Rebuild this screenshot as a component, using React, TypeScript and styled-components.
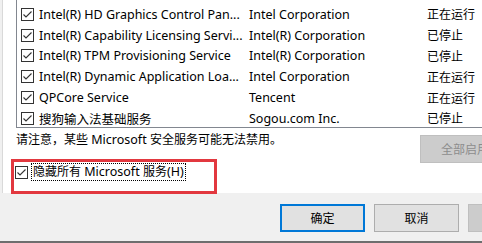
import React from "react";
import styled, { createGlobalStyle } from "styled-components";

const Global = createGlobalStyle`
  html, body { margin: 0; padding: 0; background: #f0f0f0; overflow: hidden; }
  body { width: 482px; height: 243px; }
  * { box-sizing: border-box; }
`;

const Dialog = styled.div`
  position: relative;
  width: 565px;
  height: 243px;
  display: flex;
  flex-direction: column;
  background: #f0f0f0;
  font-family: "Noto Sans", "Noto Sans CJK SC", sans-serif;
  font-size: 12.5px;
  color: #000;
`;

const TabPage = styled.div`
  height: 193px;
  margin-left: 2px;
  border-left: 1px solid #d9d9d9;
  background: #fff;
  display: flex;
  flex-direction: column;
`;

const ListBox = styled.div`
  margin-left: 13px;
  margin-right: 20px;
  height: 128px;
  border-left: 1px solid #828790;
  border-bottom: 1px solid #828790;
  border-right: 1px solid #828790;
  overflow: hidden;
  padding-top: 4px;
`;

const Row = styled.div`
  height: 20.8px;
  display: grid;
  grid-template-columns: 228px 178px 1fr;
  align-items: center;
  padding-left: 4px;
  white-space: nowrap;
`;

const NameCell = styled.div`
  display: flex;
  align-items: center;
  gap: 5px;
  overflow: hidden;
`;

const Cell = styled.div``;

const Cjk = styled.span`
  font-size: 12px;
`;

const Box = styled.span`
  width: 13px;
  height: 13px;
  flex: none;
  border: 1px solid #333;
  background: #fff;
  display: inline-flex;
  align-items: center;
  justify-content: center;
`;

const Check = () => (
  <Box>
    <svg width="11" height="11" viewBox="0 0 11 11">
      <polyline points="1.5,5.5 4,8 9.5,2.5" fill="none" stroke="#333" strokeWidth="1.1" />
    </svg>
  </Box>
);

const Lower = styled.div`
  display: grid;
  grid-template-columns: 1fr auto;
  padding-right: 41px;
`;

const LeftCol = styled.div`
  display: flex;
  flex-direction: column;
`;

const Notice = styled.div`
  margin-top: 4px;
  padding-left: 13px;
  line-height: 16px;
  white-space: nowrap;
`;

const HideRow = styled.div`
  margin-top: 15px;
  margin-left: 12px;
  display: flex;
  align-items: center;
  gap: 3px;
`;

const FocusLabel = styled.span`
  height: 18px;
  line-height: 16px;
  padding: 0 1px;
  border: 1px dotted #000;
  white-space: nowrap;
`;

const WinButton = styled.div<{ $variant?: "default" | "disabled" }>`
  width: 85px;
  height: 28px;
  display: flex;
  align-items: center;
  justify-content: center;
  font-size: 12px;
  background: ${(p) => (p.$variant === "disabled" ? "#cccccc" : "#e1e1e1")};
  border: ${(p) =>
    p.$variant === "default"
      ? "2px solid #0078d7"
      : p.$variant === "disabled"
      ? "1px solid #bfbfbf"
      : "1px solid #adadad"};
  color: ${(p) => (p.$variant === "disabled" ? "#8c8c8c" : "#000")};
  white-space: nowrap;
`;

const EnableAll = styled(WinButton)`
  margin-top: 7px;
  width: 104px;
`;

const Footer = styled.div`
  height: 48px;
  display: flex;
  justify-content: flex-end;
  gap: 9px;
  padding-top: 11px;
  padding-right: 12px;
  background: #f0f0f0;
`;

const BottomEdge = styled.div`
  height: 2px;
  background: #6e6e6e;
`;

const Annotation = styled.div`
  position: absolute;
  left: 11px;
  top: 159px;
  width: 206px;
  height: 35px;
  border: 3px solid #e2383f;
  pointer-events: none;
`;

const rows = [
  ["Intel(R) HD Graphics Control Pan...", "Intel Corporation", "正在运行"],
  ["Intel(R) Capability Licensing Servi...", "Intel(R) Corporation", "已停止"],
  ["Intel(R) TPM Provisioning Service", "Intel(R) Corporation", "已停止"],
  ["Intel(R) Dynamic Application Loa...", "Intel Corporation", "正在运行"],
  ["QPCore Service", "Tencent", "正在运行"],
  ["搜狗输入法基础服务", "Sogou.com Inc.", "已停止"],
];

export default function App() {
  return (
    <Dialog>
      <Global />
      <TabPage>
        <ListBox>
          {rows.map(([name, maker, status]) => (
            <Row key={name}>
              <NameCell>
                <Check />
                <span>{name}</span>
              </NameCell>
              <Cell>{maker}</Cell>
              <Cell>
                <Cjk>{status}</Cjk>
              </Cell>
            </Row>
          ))}
        </ListBox>
        <Lower>
          <LeftCol>
            <Notice>
              <Cjk>请注意，某些</Cjk> Microsoft <Cjk>安全服务可能无法禁用。</Cjk>
            </Notice>
            <HideRow>
              <Check />
              <FocusLabel>
                <Cjk>隐藏所有</Cjk> Microsoft <Cjk>服务</Cjk>(H)
              </FocusLabel>
            </HideRow>
          </LeftCol>
          <EnableAll $variant="disabled">全部启用(E)</EnableAll>
        </Lower>
      </TabPage>
      <Footer>
        <WinButton $variant="default">确定</WinButton>
        <WinButton>取消</WinButton>
        <WinButton $variant="disabled">应用(A)</WinButton>
      </Footer>
      <BottomEdge />
      <Annotation />
    </Dialog>
  );
}
